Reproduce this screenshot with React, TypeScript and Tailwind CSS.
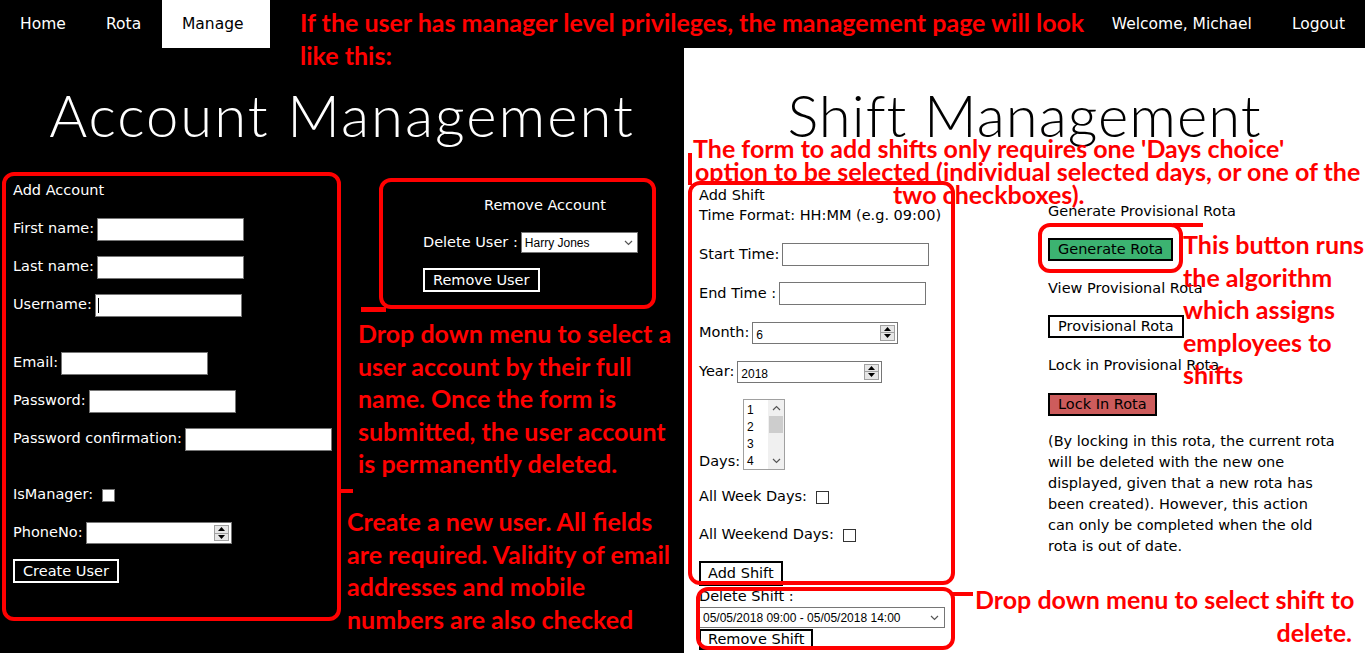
import React from 'react'

const ui = "font-['DejaVu_Sans',sans-serif]"
const note = "font-['Lato',sans-serif] font-bold text-[#ff0000] whitespace-nowrap text-[25px]"
const small = "font-['Liberation_Sans',sans-serif] text-[12px]"
const title = "font-['Lato',sans-serif] mt-[38px] h-[58px] text-center text-[58px] font-light leading-none"

function Arrow({ up }: { up?: boolean }) {
  return (
    <svg width="7" height="4" viewBox="0 0 7 4">
      <path d={up ? 'M0 4 L3.5 0 L7 4 Z' : 'M0 0 L3.5 4 L7 0 Z'} fill="#000" />
    </svg>
  )
}

function Spinner() {
  return (
    <span className="absolute bottom-[2px] right-[2px] top-[2px] flex w-[15px] flex-col border border-[#a0a0a0] bg-[#e6e6e6]">
      <span className="flex flex-1 items-center justify-center border-b border-[#a0a0a0]">
        <Arrow up />
      </span>
      <span className="flex flex-1 items-center justify-center">
        <Arrow />
      </span>
    </span>
  )
}

function Chevron({ up }: { up?: boolean }) {
  return (
    <svg width="9" height="6" viewBox="0 0 9 6">
      <path
        d={up ? 'M1 5 L4.5 1.5 L8 5' : 'M1 1 L4.5 4.5 L8 1'}
        fill="none"
        stroke="#555"
        strokeWidth="1.2"
      />
    </svg>
  )
}

function Row({ label, children, h = 'h-[38px]' }: { label: string; children?: React.ReactNode; h?: string }) {
  return (
    <div className={`flex items-center gap-[3px] ${h}`}>
      <span>{label}</span>
      {children}
    </div>
  )
}

function Box({ w, h = 'h-[23px]', children }: { w: string; h?: string; children?: React.ReactNode }) {
  return <span className={`relative inline-block border border-[#767676] bg-white ${w} ${h}`}>{children}</span>
}

function AccountSide() {
  return (
    <section className="w-[684px] shrink-0 bg-black text-white">
      <h1 className={`${title} tracking-[2px]`}>Account Management</h1>
      <div className="mt-[28px] flex">
        <form className="w-[423px] shrink-0 pl-[13px]">
          <Row label="Add Account" />
          <Row label="First name:">
            <Box w="w-[147px]" />
          </Row>
          <Row label="Last name:">
            <Box w="w-[147px]" />
          </Row>
          <Row label="Username:">
            <Box w="w-[147px]">
              <span className="absolute left-[2px] top-[3px] h-[15px] w-px bg-black" />
            </Box>
          </Row>
          <div className="h-[20px]" />
          <Row label="Email:">
            <Box w="w-[147px]" />
          </Row>
          <Row label="Password:">
            <Box w="w-[147px]" />
          </Row>
          <Row label="Password confirmation:">
            <Box w="w-[147px]" />
          </Row>
          <div className="h-[18px]" />
          <Row label="IsManager:">
            <span className="ml-[6px] inline-block h-[13px] w-[13px] border border-[#767676] bg-white" />
          </Row>
          <Row label="PhoneNo:">
            <Box w="w-[146px]" h="h-[22px]">
              <Spinner />
            </Box>
          </Row>
          <div className="flex h-[38px] items-center">
            <button type="button" className="h-[24px] border-2 border-white px-[8px] leading-none">
              Create User
            </button>
          </div>
        </form>
        <form className="pt-[23px]">
          <div className="h-[20px] pl-[61px] leading-[20px]">Remove Account</div>
          <div className="mt-[17px] flex items-center gap-[3px]">
            <span>Delete User :</span>
            <span className={`flex h-[21px] w-[117px] items-center justify-between border border-[#767676] bg-white pl-[3px] pr-[4px] text-black ${small}`}>
              Harry Jones
              <Chevron />
            </span>
          </div>
          <button type="button" className="mt-[14px] h-[24px] border-2 border-white px-[8px] leading-none">
            Remove User
          </button>
        </form>
      </div>
    </section>
  )
}

function ShiftSide() {
  return (
    <section className="flex-1 bg-white text-black">
      <h1 className={`${title} tracking-[1px]`}>Shift Management</h1>
      <div className="mt-[28px] flex">
        <form className="w-[364px] shrink-0 pl-[15px] pt-[13px]">
          <div className="h-[20px] leading-[20px]">Add Shift</div>
          <div className="h-[20px] leading-[20px]">Time Format: HH:MM (e.g. 09:00)</div>
          <div className="h-[10px]" />
          <Row label="Start Time:" h="h-[39px]">
            <Box w="w-[147px]" />
          </Row>
          <Row label="End Time :" h="h-[39px]">
            <Box w="w-[147px]" />
          </Row>
          <Row label="Month:" h="h-[39px]">
            <Box w="w-[146px]" h="h-[22px]">
              <span className={`absolute left-[3px] top-[3px] ${small}`}>6</span>
              <Spinner />
            </Box>
          </Row>
          <Row label="Year:" h="h-[39px]">
            <Box w="w-[145px]" h="h-[22px]">
              <span className={`absolute left-[3px] top-[3px] ${small}`}>2018</span>
              <Spinner />
            </Box>
          </Row>
          <div className="mt-[8px] flex items-end gap-[3px]">
            <span className="leading-[18px]">Days:</span>
            <div className="flex h-[71px] w-[42px] border border-[#a0a0a0] bg-white">
              <div className={`flex-1 pl-[3px] pt-[2px] leading-[17px] ${small}`}>
                <div>1</div>
                <div>2</div>
                <div>3</div>
                <div>4</div>
              </div>
              <div className="flex w-[16px] flex-col bg-[#f0f0f0]">
                <span className="flex h-[16px] items-center justify-center">
                  <Chevron up />
                </span>
                <span className="mx-[1px] h-[17px] bg-[#cdcdcd]" />
                <span className="flex-1" />
                <span className="flex h-[16px] items-center justify-center">
                  <Chevron />
                </span>
              </div>
            </div>
          </div>
          <div className="mt-[8px]">
            <Row label="All Week Days:">
              <span className="ml-[6px] inline-block h-[13px] w-[13px] border border-[#333] bg-white" />
            </Row>
            <Row label="All Weekend Days:">
              <span className="ml-[6px] inline-block h-[13px] w-[13px] border border-[#333] bg-white" />
            </Row>
          </div>
          <button type="button" className="mt-[7px] h-[25px] border-2 border-black px-[7px] leading-none">
            Add Shift
          </button>
          <div className="mt-[1px] h-[18px] leading-[18px]">Delete Shift :</div>
          <span className={`mt-[2px] flex h-[21px] w-[246px] items-center justify-between border border-[#767676] bg-white pl-[3px] pr-[5px] ${small}`}>
            05/05/2018 09:00 - 05/05/2018 14:00
            <Chevron />
          </span>
          <button type="button" className="mt-[1px] h-[21px] border-2 border-black px-[7px] leading-none">
            Remove Shift
          </button>
        </form>
        <div className="pt-[29px] pr-[18px]">
          <div className="h-[20px] leading-[20px]">Generate Provisional Rota</div>
          <button type="button" className="mt-[17px] h-[23px] border-2 border-black bg-[#3cb371] px-[8px] leading-none">
            Generate Rota
          </button>
          <div className="mt-[17px] h-[20px] leading-[20px]">View Provisional Rota</div>
          <button type="button" className="mt-[17px] h-[23px] border-2 border-black bg-white px-[8px] leading-none">
            Provisional Rota
          </button>
          <div className="mt-[17px] h-[20px] leading-[20px]">Lock in Provisional Rota</div>
          <button type="button" className="mt-[18px] h-[23px] border-2 border-black bg-[#cd5c5c] px-[8px] leading-none">
            Lock In Rota
          </button>
          <p className="mt-[15px] leading-[21px]">
            <span className="block whitespace-nowrap">(By locking in this rota, the current rota</span>
            <span className="block whitespace-nowrap">will be deleted with the new one</span>
            <span className="block whitespace-nowrap">displayed, given that a new rota has</span>
            <span className="block whitespace-nowrap">been created). However, this action</span>
            <span className="block whitespace-nowrap">can only be completed when the old</span>
            <span className="block whitespace-nowrap">rota is out of date.</span>
          </p>
        </div>
      </div>
    </section>
  )
}

function Annotations() {
  const line = 'absolute bg-[#ff0000]'
  const ring = 'absolute rounded-[12px] border-4 border-[#ff0000]'
  return (
    <>
      {/* outlines */}
      <div className={`${ring} left-[2px] top-[172px] h-[449px] w-[339px]`} />
      <div className={`${line} left-[340px] top-[489px] h-[4px] w-[13px]`} />
      <div className={`${ring} left-[379px] top-[178px] h-[131px] w-[277px]`} />
      <div className={`${line} left-[361px] top-[307px] h-[5px] w-[25px]`} />
      <div className={`${ring} left-[688px] top-[181px] h-[404px] w-[267px]`} />
      <div className={`${line} left-[688px] top-[153px] h-[32px] w-[4px]`} />
      <div className={`${ring} left-[696px] top-[587px] h-[63px] w-[259px]`} />
      <div className={`${line} left-[953px] top-[592px] h-[4px] w-[20px]`} />
      <div className={`${ring} left-[1038px] top-[223px] h-[50px] w-[145px]`} />
      <div className={`${line} left-[1173px] top-[223px] h-[4px] w-[30px]`} />

      {/* notes */}
      <div className={`${note} absolute left-[300px] top-[6px] leading-[33px]`}>
        <div>If the user has manager level privileges, the management page will look</div>
        <div>like this:</div>
      </div>
      <div className={`${note} absolute left-[358px] top-[317px] leading-[32.5px]`}>
        <div>Drop down menu to select a</div>
        <div>user account by their full</div>
        <div>name. Once the form is</div>
        <div>submitted, the user account</div>
        <div>is permanently deleted.</div>
      </div>
      <div className={`${note} absolute left-[347px] top-[505px] leading-[32.7px]`}>
        <div>Create a new user. All fields</div>
        <div>are required. Validity of email</div>
        <div>addresses and mobile</div>
        <div>numbers are also checked</div>
      </div>
      <div className={`${note} absolute left-[693px] top-[137px] leading-[23px]`}>
        <div>The form to add shifts only requires one 'Days choice'</div>
        <div className="pl-[2px]">option to be selected (individual selected days, or one of the</div>
        <div className="pl-[200px]">two checkboxes).</div>
      </div>
      <div className={`${note} absolute left-[1183px] top-[228px] leading-[32.5px]`}>
        <div>This button runs</div>
        <div>the algorithm</div>
        <div>which assigns</div>
        <div>employees to</div>
        <div>shifts</div>
      </div>
      <div className={`${note} absolute left-[975px] top-[583px] w-[377px] text-right leading-[33px]`}>
        <div>Drop down menu to select shift to</div>
        <div>delete.</div>
      </div>
    </>
  )
}

export default function App() {
  return (
    <div className={`relative h-[653px] w-[1365px] overflow-hidden bg-black text-[14.5px] ${ui}`}>
      <nav className="flex h-[48px] items-stretch pt-[2px] text-[15.5px] text-white">
        <a className="flex w-[86px] items-center pl-[20px]">Home</a>
        <a className="flex w-[76px] items-center pl-[20px]">Rota</a>
        <a className="-mt-[2px] flex w-[108px] items-center bg-white pl-[20px] pt-[2px] text-black">Manage</a>
        <div className="ml-auto flex items-center">
          <span className="mr-[40px]">Welcome, Michael</span>
          <span className="mr-[20px]">Logout</span>
        </div>
      </nav>
      <div className="flex h-[605px]">
        <AccountSide />
        <ShiftSide />
      </div>
      <Annotations />
    </div>
  )
}
